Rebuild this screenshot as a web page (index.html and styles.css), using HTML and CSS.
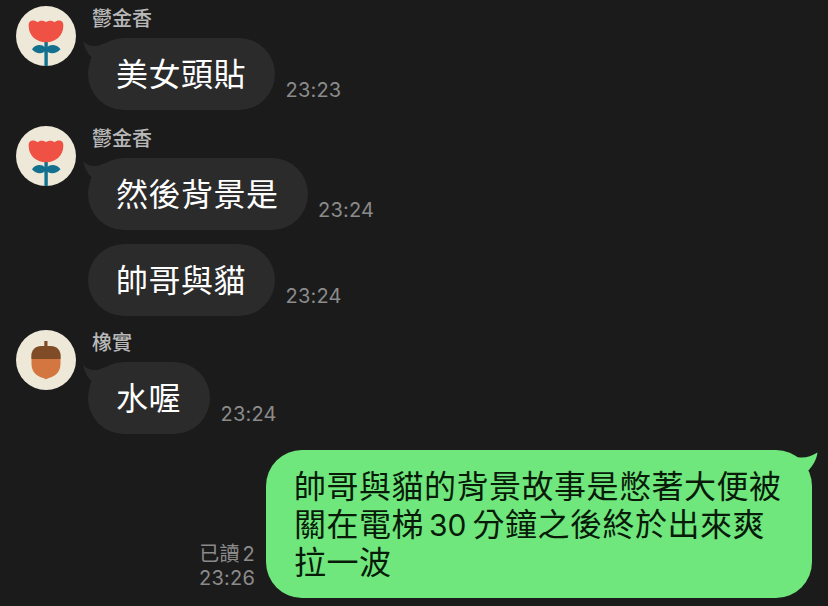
FILE: index.html
```html
<!DOCTYPE html>
<html lang="zh-Hant">
<head>
  <meta charset="UTF-8" />
  <meta name="viewport" content="width=device-width, initial-scale=1.0" />
  <title>聊天</title>
  <link rel="stylesheet" href="styles.css">
</head>
<body>

  <!-- Shared drawings -->
  <svg class="defs" width="0" height="0">
    <symbol id="tulip" viewBox="0 0 60 60">
      <rect width="60" height="60" fill="#eee8d9" />
      <path d="M28.4 35h3.4v25h-3.4z" fill="#14708f" />
      <path d="M30 42.500C26.500 37.500 19.500 38 16 43.200C20 48.500 27 48 30 44.500C33 48 40 48.500 44.500 43.200C40.500 38 33.500 37.500 30 42.500z" fill="#14708f" />
      <path d="M12.700 20C12 14 18 13.200 21.500 16.200C23.500 14.200 28 14.200 30 16.200C32 14.200 36.500 14.200 38.500 16.200C42 13.200 48 14 47.300 20C47.300 29.500 40 36.200 30 36.200C20 36.200 12.700 29.500 12.700 20z" fill="#ef5244" />
    </symbol>
    <symbol id="acorn" viewBox="0 0 60 60">
      <rect width="60" height="60" fill="#eee8d9" />
      <path d="M28.300 11h3.200v7h-3.200z" fill="#804c27" />
      <path d="M15.500 28.500h29V34C44.500 43 38 46.500 33.500 47.800L30 49.300L26.500 47.800C22 46.500 15.500 43 15.500 34z" fill="#d4763f" />
      <path d="M15.300 29V26C15.300 20 19.500 16 25 16h10C40.500 16 44.700 20 44.700 26v3z" fill="#804c27" />
    </symbol>
    <symbol id="tail" viewBox="0 0 24 24">
      <path d="M0 0C4 4.500 10 6 16 4.500L22 2L24 24L7 20L8.500 16C5 13 2 8 0 0z" />
    </symbol>
  </svg>

  <div class="chat">
    <div class="message">
      <svg class="avatar"><use href="#tulip" /></svg>
      <div class="content">
        <div class="name">鬱金香</div>
        <div class="row">
          <div class="bubble"><svg class="tail"><use href="#tail" /></svg>美女頭貼</div>
          <span class="time">23:23</span>
        </div>
      </div>
    </div>

    <div class="message">
      <svg class="avatar"><use href="#tulip" /></svg>
      <div class="content">
        <div class="name">鬱金香</div>
        <div class="row">
          <div class="bubble"><svg class="tail"><use href="#tail" /></svg>然後背景是</div>
          <span class="time">23:24</span>
        </div>
        <div class="row">
          <div class="bubble">帥哥與貓</div>
          <span class="time">23:24</span>
        </div>
      </div>
    </div>

    <div class="message">
      <svg class="avatar"><use href="#acorn" /></svg>
      <div class="content">
        <div class="name">橡實</div>
        <div class="row">
          <div class="bubble"><svg class="tail"><use href="#tail" /></svg>水喔</div>
          <span class="time">23:24</span>
        </div>
      </div>
    </div>

    <!-- My own message -->
    <div class="message mine">
      <div class="status">
        <span>已讀<span class="count">2</span></span>
        <span>23:26</span>
      </div>
      <div class="bubble"><svg class="tail" viewBox="0 0 22 24"><path d="M0 7L4 7.500C10 8 16 6 21.500 2.500C20.500 10 17 15 13 20L2 24z" /></svg>帥哥與貓的背景故事是憋著大便被<br>關在電梯<span class="number">30</span>分鐘之後終於出來爽<br>拉一波</div>
    </div>
  </div>

</body>
</html>
```
FILE: styles.css
```css
body {
  margin: 0;
  background: #1b1b1b;
  font-family: Inter, "Noto Sans CJK TC", sans-serif;
  overflow: hidden;
}

.defs {
  display: block;
}

.chat {
  display: flex;
  flex-direction: column;
  gap: 16px;
  padding: 6px 16px 0;
}

.message {
  display: flex;
  gap: 12px;
}

/* First bubble of a group is 14px above the next one */
.content {
  display: flex;
  flex-direction: column;
  gap: 14px;
}

.message:nth-child(2) {
  margin-bottom: -2px;
}

.avatar {
  width: 60px;
  height: 60px;
  border-radius: 50%;
}

.name {
  box-sizing: border-box;
  height: 24px;
  margin: 0 0 -6px 4px;
  padding-top: 1px;
  line-height: 24px;
  font-size: 20px;
  font-weight: 500;
  color: #b8b8b8;
}

.row {
  display: flex;
  align-items: flex-end;
  gap: 10.5px;
}

/* Bubbles */
.bubble {
  position: relative;
  box-sizing: border-box;
  padding: 18px 29px 16px 28px;
  border-radius: 36px;
  background: #2b2b2b;
  color: #fff;
  font-size: 32px;
  font-weight: 400;
  line-height: 38px;
  letter-spacing: 0.5px;
  white-space: nowrap;
}

.tail {
  position: absolute;
  top: 3px;
  left: -5px;
  width: 24px;
  height: 24px;
  fill: #2b2b2b;
}

.time,
.status {
  color: #8b8b8b;
  font-size: 20px;
  line-height: 24px;
  letter-spacing: 0.2px;
}

.time {
  margin-bottom: 8px;
}

/* Own message, right side */
.mine {
  justify-content: flex-end;
  align-items: flex-end;
  gap: 11px;
}

.mine .bubble {
  width: 546px;
  height: 148px;
  background: #6fe77d;
  color: #081b09;
}

.mine .tail {
  top: 0;
  left: auto;
  right: -6px;
  width: 22px;
  fill: #6fe77d;
}

.status {
  display: flex;
  flex-direction: column;
  align-items: flex-end;
  margin-bottom: 8px;
}

.count {
  margin-left: 3px;
}

.number {
  margin: 0 6px 0 5px;
  font-size: 30px;
  letter-spacing: 0;
}
```
